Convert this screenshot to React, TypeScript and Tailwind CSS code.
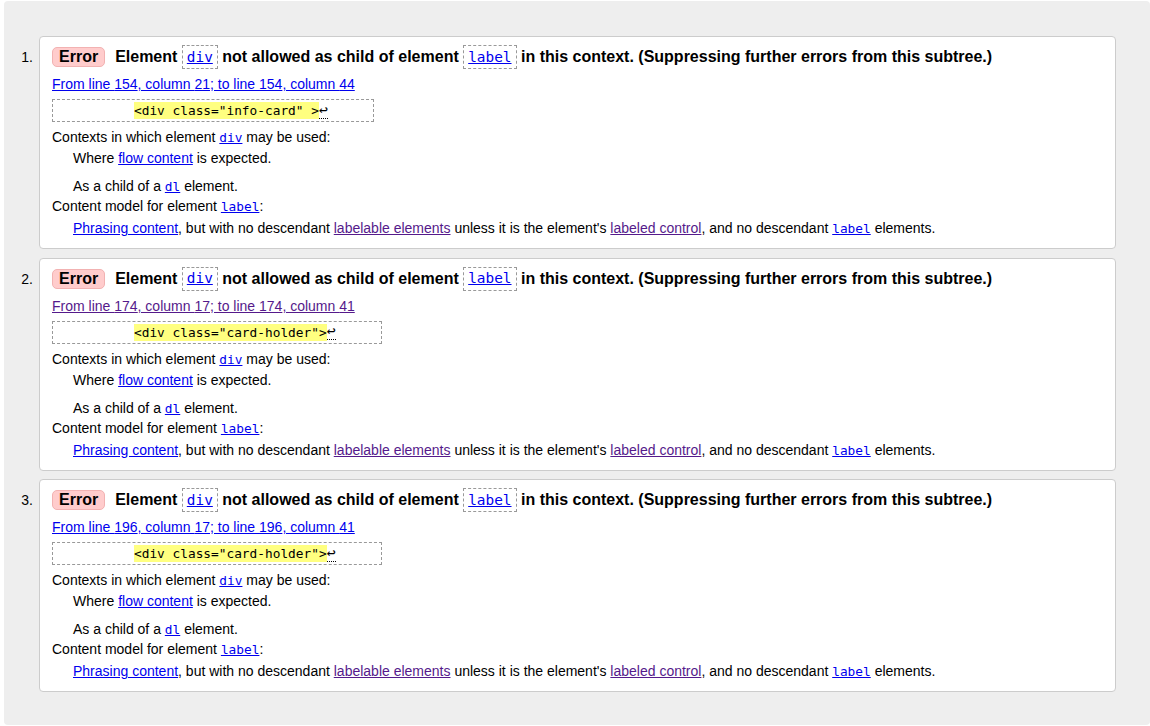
import type { ReactNode } from "react";

type Issue = {
  num: number;
  line: number;
  from: number;
  to: number;
  code: string;
  visited: boolean;
};

const issues: Issue[] = [
  { num: 1, line: 154, from: 21, to: 44, code: '<div class="info-card" >', visited: false },
  { num: 2, line: 174, from: 17, to: 41, code: '<div class="card-holder">', visited: true },
  { num: 3, line: 196, from: 17, to: 41, code: '<div class="card-holder">', visited: false },
];

const mono = "font-['DejaVu_Sans_Mono','Liberation_Mono',monospace]";

function Link({ children, visited }: { children: ReactNode; visited?: boolean }) {
  return (
    <a href="#" className={visited ? "text-[#551a8b] underline" : "text-[#0000ee] underline"}>
      {children}
    </a>
  );
}

function CodeLink({ children, big }: { children: ReactNode; big?: boolean }) {
  return (
    <a
      href="#"
      className={`${mono} ${big ? "text-[14.4px]" : "text-[12.8px]"} font-normal leading-none text-[#0000ee] underline`}
    >
      {children}
    </a>
  );
}

function Boxed({ children }: { children: ReactNode }) {
  return (
    <span className="inline-flex h-[24px] items-center border border-dashed border-[#999] px-[4px]">
      <CodeLink big>{children}</CodeLink>
    </span>
  );
}

function IssueCard({ issue }: { issue: Issue }) {
  return (
    <div className="flex">
      <div className="w-[29px] shrink-0 pt-[9px] text-right text-[14px] leading-[24px] text-black">
        {issue.num}.
      </div>
      <div className="ml-[6px] flex-1 rounded-[4px] border border-[#cccccc] bg-white px-[12px] pt-[8px] pb-[11px] text-[14px] leading-[18px] text-black">
        <p className="flex h-[24px] items-center whitespace-pre text-[16px] font-bold">
          <span className="mr-[10px] inline-flex h-[20px] items-center rounded-[5px] border border-[#f2b2b2] bg-[#ffcccc] px-[6px]">
            Error
          </span>
          Element <Boxed>div</Boxed> not allowed as child of element <Boxed>label</Boxed> in this
          context. (Suppressing further errors from this subtree.)
        </p>

        <p className="mt-[6px]">
          <Link visited={issue.visited}>
            From line {issue.line}, column {issue.from}; to line {issue.line}, column {issue.to}
          </Link>
        </p>

        <div className="mt-[6px] flex">
          <code
            className={`${mono} flex h-[23px] items-center whitespace-pre border border-dashed border-[#999] pl-[81px] pr-[45px] text-[12.8px] leading-[17px] text-black`}
          >
            <span className="bg-[#ffff80]">{issue.code}</span>
            <span className="border-b border-dotted border-black text-[15px] leading-[15px]">↩</span>
          </code>
        </div>

        <dl>
          <dt className="mt-[6px]">
            Contexts in which element <CodeLink>div</CodeLink> may be used:
          </dt>
          <dd className="mt-[3px] ml-[21px]">
            Where <Link>flow content</Link> is expected.
          </dd>
          <dd className="mt-[10px] ml-[21px]">
            As a child of a <CodeLink>dl</CodeLink> element.
          </dd>
          <dt className="mt-[2px]">
            Content model for element <CodeLink>label</CodeLink>:
          </dt>
          <dd className="mt-[4px] ml-[21px]">
            <Link>Phrasing content</Link>, but with no descendant{" "}
            <Link visited>labelable elements</Link> unless it is the element's{" "}
            <Link visited>labeled control</Link>, and no descendant <CodeLink>label</CodeLink>{" "}
            elements.
          </dd>
        </dl>
      </div>
    </div>
  );
}

export default function App() {
  return (
    <div className="min-h-screen bg-white pt-[1px] pl-[4px] font-['Liberation_Sans',Arial,sans-serif]">
      <div className="flex flex-col gap-[8.5px] rounded-[4px] bg-[#eeeeee] pt-[35px] pr-[34px] pb-[33px]">
        {issues.map((issue) => (
          <IssueCard key={issue.num} issue={issue} />
        ))}
      </div>
    </div>
  );
}
